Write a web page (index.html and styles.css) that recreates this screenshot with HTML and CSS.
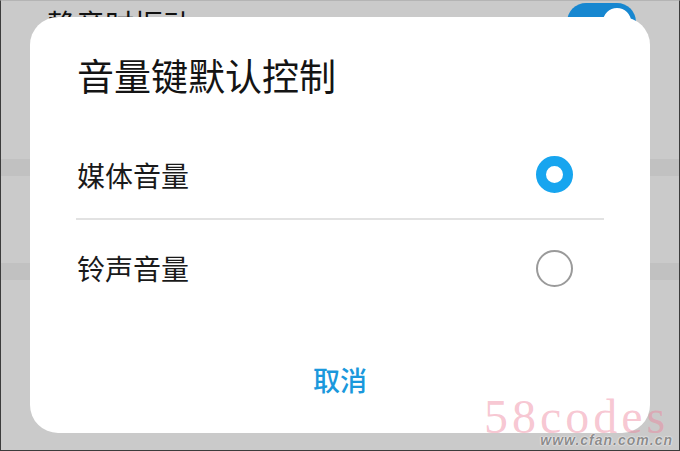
FILE: index.html
```html
<!DOCTYPE html>
<html lang="zh-CN">
  <head>
    <meta charset="utf-8" />
    <link rel="stylesheet" href="styles.css">
  </head>
  <body>
    <section class="screen">
      <div class="settings">
        <div class="setting-row">
          <span class="setting-label">静音时振动</span>
          <span class="toggle"><span class="knob"></span></span>
        </div>
        <div class="band band-one"></div>
        <div class="band band-two"></div>
      </div>

      <div class="dialog">
        <h1 class="dialog-title">音量键默认控制</h1>
        <ul class="options">
          <li class="option option-first">
            <span>媒体音量</span>
            <span class="radio checked"></span>
          </li>
          <li class="option option-last">
            <span>铃声音量</span>
            <span class="radio"></span>
          </li>
        </ul>
        <div class="actions">
          <button class="btn-cancel">取消</button>
        </div>
      </div>

      <span class="wm-big">58codes</span>
      <span class="wm-small">www.cfan.com.cn</span>
    </section>
  </body>
</html>
```

FILE: styles.css
```css
* {
  box-sizing: border-box;
}

body {
  margin: 0;
  font-family: "Noto Sans CJK SC", "Noto Sans", sans-serif;
}

.screen {
  position: relative;
  width: 680px;
  height: 451px;
  overflow: hidden;
  background: #cacaca;
  border: 1px solid #3c3c3c;
  border-top-color: #b4b4b4;
}

.settings {
  display: flex;
  flex-direction: column;
}

.setting-row {
  display: flex;
  justify-content: space-between;
  align-items: flex-start;
  padding: 2px 43px 0 46px;
  height: 140px;
}

.setting-label {
  margin-top: 6px;
  font-size: 29px;
  line-height: 29px;
  color: #111;
}

.toggle {
  position: relative;
  width: 69px;
  height: 38px;
  border-radius: 19px;
  background: #1787d0;
}

.knob {
  position: absolute;
  right: 2px;
  top: 2px;
  width: 34px;
  height: 34px;
  border-radius: 50%;
  background: #fff;
  border: 3px solid #1787d0;
}

.band {
  height: 17px;
  background: #c1c1c1;
}

.band-one {
  margin-top: 18px;
}

.band-two {
  margin-top: 87px;
}

.dialog {
  position: absolute;
  left: 29px;
  top: 16px;
  width: 620px;
  height: 416px;
  background: #fff;
  border-radius: 28px;
  padding: 34px 46px 0 46px;
  display: flex;
  flex-direction: column;
}

.dialog-title {
  margin: 0 0 0 1px;
  font-size: 37px;
  line-height: 48px;
  font-weight: 400;
  color: #141414;
}

.options {
  list-style: none;
  margin: 32px 0 0 0;
  padding: 0;
}

.option {
  display: flex;
  justify-content: space-between;
  align-items: center;
  padding: 0 31px 0 1px;
  font-size: 28px;
  color: #1a1a1a;
}

.option-first {
  height: 89px;
  border-bottom: 2px solid #e2e2e2;
}

.option-last {
  height: 96px;
}

.radio {
  width: 37px;
  height: 37px;
  border-radius: 50%;
  border: 2px solid #9a9a9a;
}

.radio.checked {
  border: 10px solid #17a5ef;
}

.actions {
  display: flex;
  justify-content: center;
  margin-top: 40px;
}

.btn-cancel {
  border: none;
  background: none;
  padding: 0;
  font-family: "Noto Sans CJK SC", sans-serif;
  font-size: 27px;
  line-height: 48px;
  font-weight: 500;
  color: #1a98dc;
}

.wm-big {
  position: absolute;
  left: 483px;
  top: 400px;
  font-family: "Liberation Serif", serif;
  font-size: 48px;
  line-height: 32px;
  letter-spacing: 4px;
  color: rgba(238, 130, 155, 0.45);
}

.wm-small {
  position: absolute;
  right: 6px;
  top: 435px;
  font-family: "Liberation Sans", sans-serif;
  font-size: 14px;
  line-height: 8px;
  font-weight: 700;
  font-style: italic;
  letter-spacing: 1px;
  color: #8c8c8c;
  text-shadow: 0 0 2px #fff, 0 0 1px #fff;
}
```
